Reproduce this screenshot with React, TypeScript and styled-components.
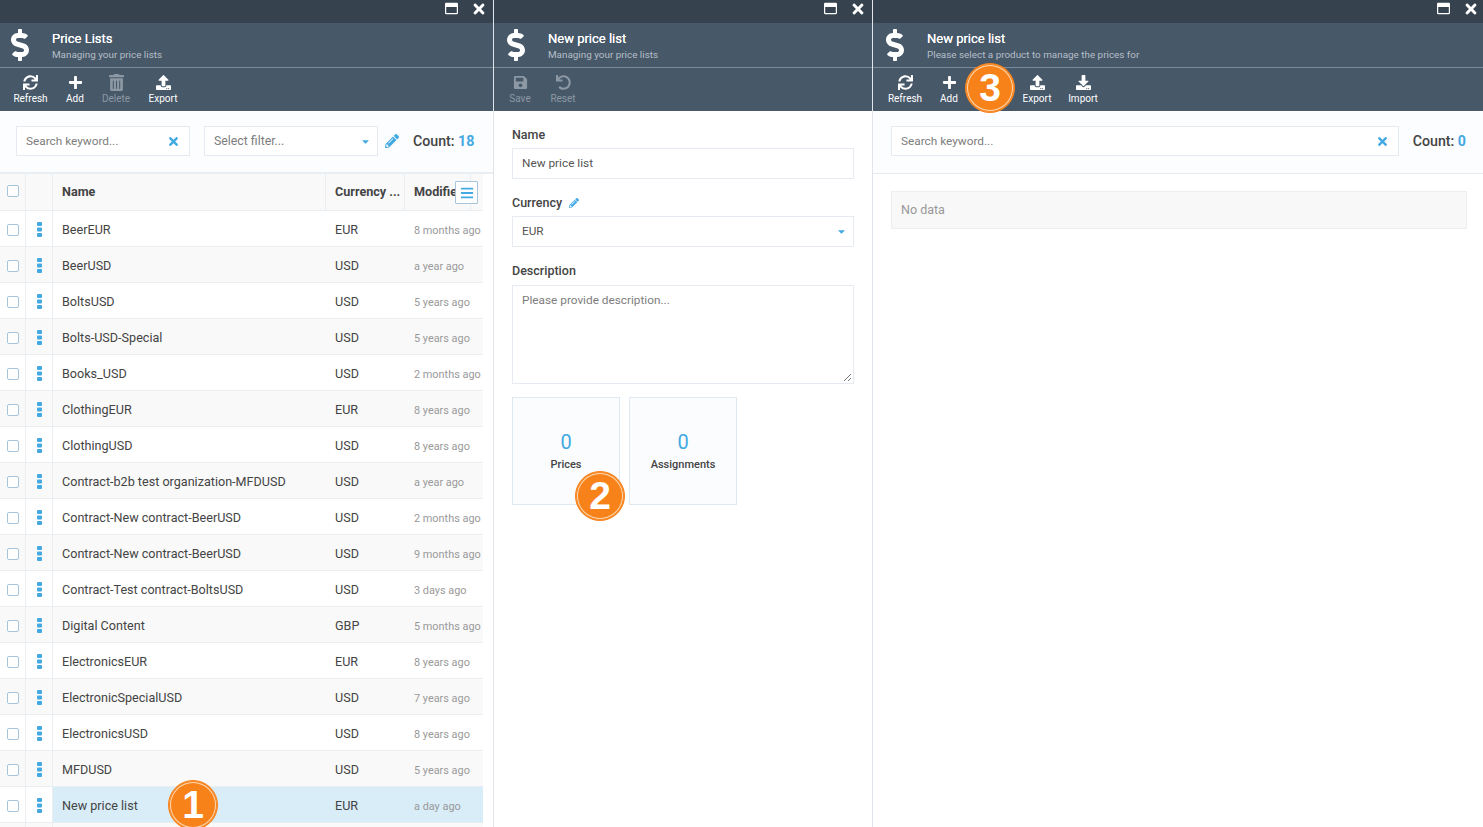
import React from "react";
import styled, { createGlobalStyle } from "styled-components";
import {
  FaBars,
  FaCaretDown,
  FaDollarSign,
  FaDownload,
  FaPencilAlt,
  FaPlus,
  FaRegWindowMaximize,
  FaSave,
  FaSync,
  FaTimes,
  FaTrashAlt,
  FaUndo,
  FaUpload,
} from "react-icons/fa";

const rows = [
  ["BeerEUR", "EUR", "8 months ago"],
  ["BeerUSD", "USD", "a year ago"],
  ["BoltsUSD", "USD", "5 years ago"],
  ["Bolts-USD-Special", "USD", "5 years ago"],
  ["Books_USD", "USD", "2 months ago"],
  ["ClothingEUR", "EUR", "8 years ago"],
  ["ClothingUSD", "USD", "8 years ago"],
  ["Contract-b2b test organization-MFDUSD", "USD", "a year ago"],
  ["Contract-New contract-BeerUSD", "USD", "2 months ago"],
  ["Contract-New contract-BeerUSD", "USD", "9 months ago"],
  ["Contract-Test contract-BoltsUSD", "USD", "3 days ago"],
  ["Digital Content", "GBP", "5 months ago"],
  ["ElectronicsEUR", "EUR", "8 years ago"],
  ["ElectronicSpecialUSD", "USD", "7 years ago"],
  ["ElectronicsUSD", "USD", "8 years ago"],
  ["MFDUSD", "USD", "5 years ago"],
  ["New price list", "EUR", "a day ago"],
  ["", "", ""],
];

const GlobalStyle = createGlobalStyle`
  html, body {
    margin: 0;
    padding: 0;
    height: 100%;
    overflow: hidden;
    background: #fff;
    font-family: Roboto, "Liberation Sans", sans-serif;
    color: #333;
  }
`;

const Page = styled.div`
  display: flex;
  width: 1483px;
  height: 827px;
  overflow: hidden;
`;

const Blade = styled.section<{ $width: number; $last?: boolean }>`
  position: relative;
  flex: 0 0 ${(p) => p.$width}px;
  width: ${(p) => p.$width}px;
  height: 827px;
  display: flex;
  flex-direction: column;
  overflow: hidden;
  box-sizing: border-box;
  background: #fff;
  border-right: ${(p) => (p.$last ? "none" : "1px solid #dfe5ea")};
`;

const WindowBar = styled.div<{ $right: number }>`
  flex: 0 0 23px;
  background: #36434f;
  color: #fff;
  display: flex;
  justify-content: flex-end;
  align-items: flex-start;
  gap: 13px;
  padding: 2px ${(p) => p.$right}px 0 0;
  box-sizing: border-box;
  font-size: 13px;
`;

const CloseGlyph = styled(FaTimes)`
  font-size: 16px;
  margin-top: -1px;
`;

const BladeHead = styled.header`
  flex: 0 0 44px;
  background: #475869;
  color: #fff;
  display: flex;
  align-items: center;
  border-bottom: 1px solid #7b8a98;
`;

const HeadIcon = styled.div<{ $width: number }>`
  flex: 0 0 ${(p) => p.$width}px;
  display: flex;
  justify-content: center;
  font-size: 32px;
  padding-right: ${(p) => (p.$width > 52 ? 10 : 12)}px;
  box-sizing: border-box;
`;

const HeadText = styled.div`
  display: flex;
  flex-direction: column;
  gap: 3px;
  padding-top: 2px;
`;

const HeadTitle = styled.div`
  font-size: 13px;
  line-height: 15px;
  font-weight: 400;
  text-shadow: 0 0 0.4px #fff;
`;

const HeadSub = styled.div`
  font-size: 9.9px;
  line-height: 12px;
  color: #b6bfc8;
`;

const Toolbar = styled.nav<{ $pad: number }>`
  flex: 0 0 43px;
  background: #475869;
  display: flex;
  padding-left: ${(p) => p.$pad}px;
`;

const ToolButton = styled.div<{ $width: number; $off?: boolean; $skip?: number }>`
  width: ${(p) => p.$width}px;
  margin-left: ${(p) => p.$skip ?? 0}px;
  display: flex;
  flex-direction: column;
  align-items: center;
  color: ${(p) => (p.$off ? "#8c98a4" : "#fff")};
  font-size: 10px;
  line-height: 12px;
  padding-top: 6px;
  svg {
    height: 15px;
    width: 15px;
    margin: 1px 0 3px;
  }
`;

const TrashIcon = styled(FaTrashAlt)`
  && {
    height: 17px;
    width: 17px;
    margin: 0 0 2px;
  }
`;

const Filters = styled.div<{ $pad: string; $thin?: boolean }>`
  flex: 0 0 63px;
  display: flex;
  align-items: center;
  box-sizing: border-box;
  padding: ${(p) => p.$pad};
  background: #fcfdfe;
  border-bottom: ${(p) => (p.$thin ? "1px solid #e6ebf1" : "2px solid #e9eef3")};
`;

const Field = styled.div<{ $width?: number; $gap?: number }>`
  flex: ${(p) => (p.$width ? `0 0 ${p.$width}px` : "1")};
  margin-left: ${(p) => p.$gap ?? 0}px;
  height: 30px;
  box-sizing: border-box;
  background: #fff;
  border: 1px solid #e6ebf1;
  display: flex;
  align-items: center;
  justify-content: space-between;
  padding: 0 9px;
  font-size: 11.8px;
  color: #7d7d7d;
`;

const SelectField = styled(Field)`
  font-size: 12.3px;
`;

const ClearIcon = styled(FaTimes)`
  color: #43a9e2;
  font-size: 13px;
`;

const Caret = styled(FaCaretDown)`
  color: #43a9e2;
  font-size: 11px;
  margin-right: -3px;
`;

const PencilButton = styled(FaPencilAlt)`
  color: #43a9e2;
  font-size: 14px;
  margin-left: 7px;
  flex: none;
`;

const Count = styled.div`
  margin-left: 14px;
  font-size: 14.2px;
  font-weight: 500;
  color: #444;
  white-space: nowrap;
  b {
    color: #43a9e2;
    font-weight: 700;
  }
`;

const Table = styled.div`
  position: relative;
  width: 483px;
  flex: 1;
  overflow: hidden;
`;

const TableRow = styled.div<{ $alt?: boolean; $head?: boolean; $selected?: boolean }>`
  display: grid;
  grid-template-columns: 26px 27px 273px 79px 78px;
  height: ${(p) => (p.$head ? 37 : 36)}px;
  box-sizing: border-box;
  border-bottom: 1px solid #e9eef3;
  font-size: 12.6px;
  background: ${(p) => (p.$head ? "#f9f9fa" : p.$alt ? "#f9f9f9" : "#fff")};
  > div:nth-child(n + 3) {
    background: ${(p) => (p.$selected ? "#d8edf8" : "transparent")};
  }
  > div {
    padding-top: ${(p) => (p.$head ? 0 : 2)}px;
    padding-bottom: ${(p) => (p.$head ? 2 : 0)}px;
  }
`;

const Cell = styled.div<{ $bold?: boolean; $line?: boolean }>`
  display: flex;
  align-items: center;
  padding-left: 9px;
  white-space: nowrap;
  overflow: hidden;
  color: #444;
  font-weight: ${(p) => (p.$bold ? 700 : 400)};
  border-right: ${(p) => (p.$line ? "1px solid #e9eef3" : "none")};
  box-sizing: border-box;
`;

const LastHeadCell = styled(Cell)`
  width: 66px;
`;

const MarkCell = styled.div`
  display: flex;
  align-items: center;
  justify-content: center;
  border-right: 1px solid #e9eef3;
  box-sizing: border-box;
  color: #43a9e2;
`;

const TimeText = styled.span`
  font-size: 10.9px;
  color: #999;
  padding-top: 1px;
`;

const Check = styled.span`
  width: 10px;
  height: 10px;
  border: 1px solid #a6c4da;
  border-radius: 2px;
  background: #fff;
`;

const ColumnMenu = styled.div`
  position: absolute;
  top: 7px;
  left: 455px;
  width: 23px;
  height: 23px;
  box-sizing: border-box;
  border: 1px solid #a6c4da;
  border-radius: 1px;
  background: #fff;
  color: #43a9e2;
  font-size: 14px;
  display: flex;
  align-items: center;
  justify-content: center;
`;

const Form = styled.div`
  padding: 16px 18px 0 18px;
  background: #fff;
  flex: 1;
`;

const Label = styled.div`
  display: flex;
  align-items: center;
  gap: 7px;
  font-size: 12.5px;
  font-weight: 500;
  color: #444;
  line-height: 15px;
  margin-bottom: 6px;
  svg {
    color: #43a9e2;
    font-size: 10px;
  }
`;

const FormField = styled(Field)`
  height: 31px;
  width: 342px;
  margin-bottom: 16px;
  padding-bottom: 1px;
  color: #555;
  flex: none;
`;

const TextArea = styled.div`
  position: relative;
  width: 342px;
  height: 99px;
  margin-top: 7px;
  box-sizing: border-box;
  border: 1px solid #e6ebf1;
  padding: 7px 9px;
  font-size: 11.8px;
  color: #7d7d7d;
  margin-bottom: 13px;
`;

const Resizer = styled.svg`
  position: absolute;
  right: 1px;
  bottom: 1px;
`;

const Tiles = styled.div`
  display: flex;
  gap: 9px;
`;

const Tile = styled.div`
  width: 108px;
  height: 108px;
  box-sizing: border-box;
  border: 1px solid #dfe8f0;
  background: #fbfcfe;
  display: flex;
  flex-direction: column;
  align-items: center;
  padding-top: 32px;
`;

const TileCount = styled.div`
  font-size: 20px;
  line-height: 24px;
  color: #43a9e2;
`;

const TileLabel = styled.div`
  font-size: 11px;
  line-height: 13px;
  font-weight: 500;
  color: #444;
  margin-top: 4px;
`;

const EmptyArea = styled.div`
  padding: 17px 16px 0 18px;
  flex: 1;
  background: #fff;
`;

const NoData = styled.div`
  height: 38px;
  box-sizing: border-box;
  border: 1px solid #eceff2;
  background: #f8f8f8;
  color: #999;
  font-size: 12.5px;
  padding: 0 0 1px 9px;
  display: flex;
  align-items: center;
`;

const Badge = styled.div<{ $x: number; $y: number }>`
  position: absolute;
  left: ${(p) => p.$x}px;
  top: ${(p) => p.$y}px;
  width: 50px;
  height: 50px;
  box-sizing: border-box;
  border-radius: 50%;
  background: #f8821a;
  border: 1px solid #f8821a;
  box-shadow: inset 0 0 0 1px #f8821a, inset 0 0 0 2px #fcd9b4;
  color: #fff;
  font-family: "Liberation Sans", Arial, sans-serif;
  font-weight: 700;
  font-size: 39px;
  display: flex;
  align-items: center;
  justify-content: center;
  z-index: 3;
`;

type ToolProps = { icon: React.ReactNode; label: string; width: number; off?: boolean; skip?: number };

const Tool = ({ icon, label, width, off, skip }: ToolProps) => (
  <ToolButton $width={width} $off={off} $skip={skip}>
    {icon}
    {label}
  </ToolButton>
);

const WindowControls = ({ right }: { right: number }) => (
  <WindowBar $right={right}>
    <FaRegWindowMaximize />
    <CloseGlyph />
  </WindowBar>
);

type HeadProps = { title: string; sub: string; iconWidth: number };

const Head = ({ title, sub, iconWidth }: HeadProps) => (
  <BladeHead>
    <HeadIcon $width={iconWidth}>
      <FaDollarSign />
    </HeadIcon>
    <HeadText>
      <HeadTitle>{title}</HeadTitle>
      <HeadSub>{sub}</HeadSub>
    </HeadText>
  </BladeHead>
);

const RowDots = () => (
  <svg width="5" height="15" viewBox="0 0 5 15">
    <rect x="0" y="0" width="5" height="4" rx="1" fill="#43a9e2" />
    <rect x="0" y="5.5" width="5" height="4" rx="1" fill="#43a9e2" />
    <rect x="0" y="11" width="5" height="4" rx="1" fill="#43a9e2" />
  </svg>
);

export default function App() {
  return (
    <Page>
      <GlobalStyle />

      <Blade $width={494}>
        <WindowControls right={6} />
        <Head title="Price Lists" sub="Managing your price lists" iconWidth={52} />
        <Toolbar $pad={8}>
          <Tool icon={<FaSync />} label="Refresh" width={45} />
          <Tool icon={<FaPlus />} label="Add" width={44} />
          <Tool icon={<TrashIcon />} label="Delete" width={38} off />
          <Tool icon={<FaUpload />} label="Export" width={56} />
        </Toolbar>
        <Filters $pad="0 18px 1px 16px">
          <Field $width={174}>
            Search keyword...
            <ClearIcon />
          </Field>
          <SelectField $width={174} $gap={14}>
            Select filter...
            <Caret />
          </SelectField>
          <PencilButton />
          <Count>
            Count: <b>18</b>
          </Count>
        </Filters>
        <Table>
          <TableRow $head>
            <MarkCell>
              <Check />
            </MarkCell>
            <MarkCell />
            <Cell $bold $line>Name</Cell>
            <Cell $bold $line>Currency ...</Cell>
            <LastHeadCell $bold $line>Modified</LastHeadCell>
          </TableRow>
          <ColumnMenu>
            <FaBars />
          </ColumnMenu>
          {rows.map((row, i) => (
            <TableRow key={i} $alt={i % 2 === 1} $selected={row[0] === "New price list"}>
              <MarkCell>
                <Check />
              </MarkCell>
              <MarkCell>
                <RowDots />
              </MarkCell>
              <Cell>{row[0]}</Cell>
              <Cell>{row[1]}</Cell>
              <Cell>
                <TimeText>{row[2]}</TimeText>
              </Cell>
            </TableRow>
          ))}
        </Table>
        <Badge $x={168} $y={780}>1</Badge>
      </Blade>

      <Blade $width={379}>
        <WindowControls right={6} />
        <Head title="New price list" sub="Managing your price lists" iconWidth={54} />
        <Toolbar $pad={4}>
          <Tool icon={<FaSave />} label="Save" width={44} off />
          <Tool icon={<FaUndo />} label="Reset" width={42} off />
        </Toolbar>
        <Form>
          <Label>Name</Label>
          <FormField>New price list</FormField>
          <Label>
            Currency <FaPencilAlt />
          </Label>
          <FormField>
            EUR
            <Caret />
          </FormField>
          <Label>Description</Label>
          <TextArea>
            Please provide description...
            <Resizer width="9" height="9" viewBox="0 0 9 9">
              <path d="M1 8 8 1M5 8 8 5" stroke="#777" strokeWidth="1" fill="none" />
            </Resizer>
          </TextArea>
          <Tiles>
            <Tile>
              <TileCount>0</TileCount>
              <TileLabel>Prices</TileLabel>
            </Tile>
            <Tile>
              <TileCount>0</TileCount>
              <TileLabel>Assignments</TileLabel>
            </Tile>
          </Tiles>
        </Form>
        <Badge $x={81} $y={471}>2</Badge>
      </Blade>

      <Blade $width={610} $last>
        <WindowControls right={4} />
        <Head title="New price list" sub="Please select a product to manage the prices for" iconWidth={54} />
        <Toolbar $pad={9}>
          <Tool icon={<FaSync />} label="Refresh" width={46} />
          <Tool icon={<FaPlus />} label="Add" width={42} />
          <Tool icon={<FaUpload />} label="Export" width={46} skip={44} />
          <Tool icon={<FaDownload />} label="Import" width={46} />
        </Toolbar>
        <Filters $pad="0 17px 2px 18px" $thin>
          <Field>
            Search keyword...
            <ClearIcon />
          </Field>
          <Count>
            Count: <b>0</b>
          </Count>
        </Filters>
        <EmptyArea>
          <NoData>No data</NoData>
        </EmptyArea>
        <Badge $x={92} $y={63}>3</Badge>
      </Blade>
    </Page>
  );
}
